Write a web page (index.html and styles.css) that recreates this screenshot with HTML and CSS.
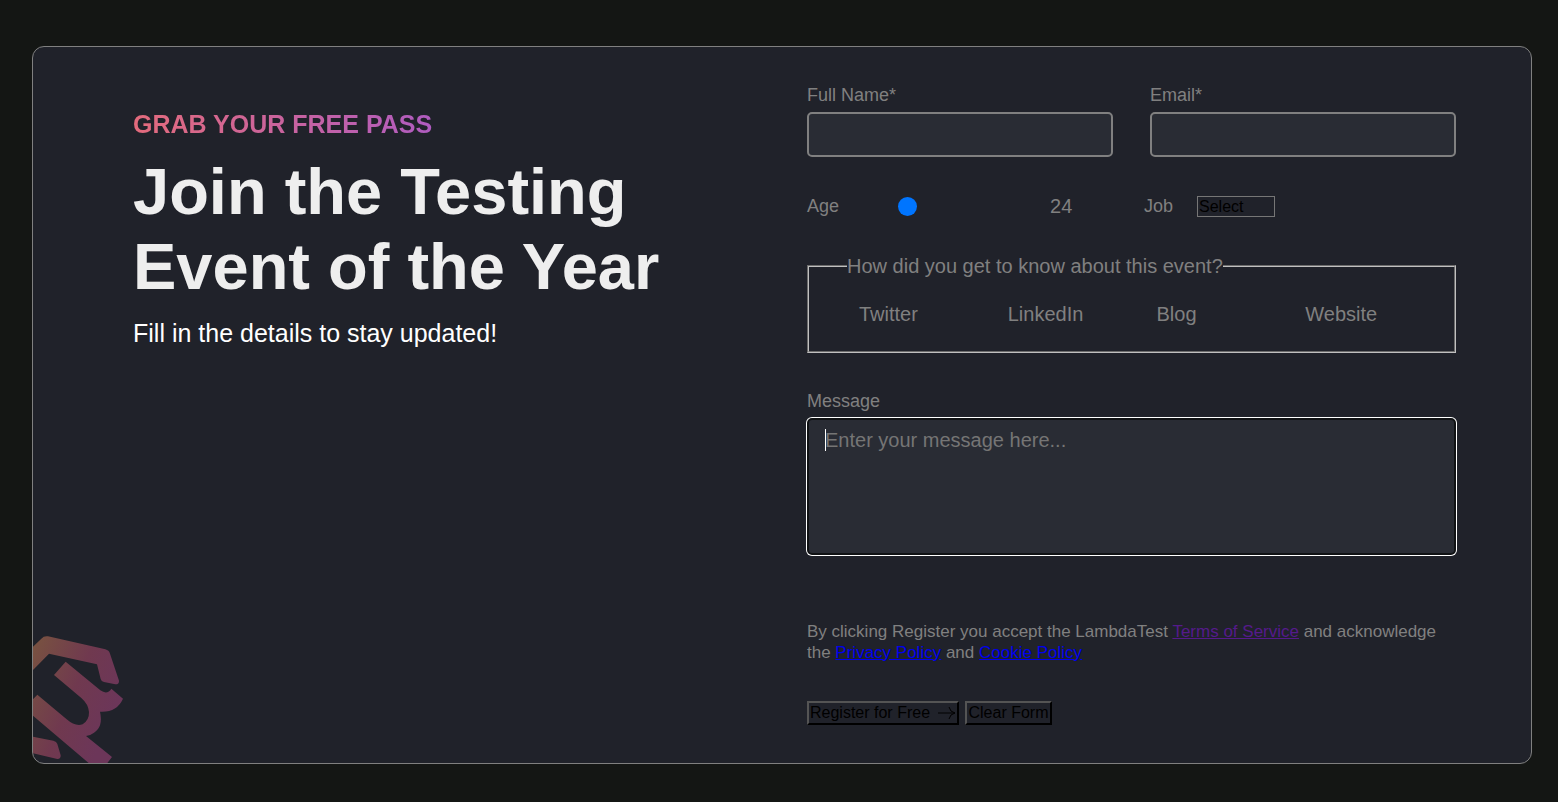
FILE: index.html
```
<!DOCTYPE html>
<html lang="en">
<head>
	<meta charset="UTF-8">
	<meta name="viewport" content="width=device-width, initial-scale=1.0">
	<title>Join the Testing Event of the Year</title>
	<link rel="stylesheet" href="styles.css">
</head>

<body>
	<main class="card">
		<section class="intro">
			<p class="tagline">GRAB YOUR FREE PASS</p>
			<h1>Join the Testing Event of the Year</h1>
			<p class="subtitle">Fill in the details to stay updated!</p>
		</section>

		<form class="register-form">
			<div class="name-row">
				<div class="field">
					<label for="fullname">Full Name*</label>
					<input id="fullname" class="text-input" type="text" name="fullname" required>
				</div>
				<div class="field">
					<label for="email">Email*</label>
					<input id="email" class="text-input" type="email" name="email" required>
				</div>
			</div>

			<div class="age-row">
				<div class="age">
					<label for="age">Age</label>
					<input id="age" type="range" name="age" min="0" max="100" value="24"
						oninput="document.getElementById('age-value').value = this.value">
					<output id="age-value" for="age">24</output>
				</div>
				<div class="job">
					<label for="job">Job</label>
					<select id="job" name="job">
						<option>Select</option>
						<option>Developer</option>
						<option>Tester</option>
					</select>
				</div>
			</div>

			<fieldset class="sources">
				<legend>How did you get to know about this event?</legend>
				<label><input type="checkbox" name="source" value="twitter">Twitter</label>
				<label><input type="checkbox" name="source" value="linkedin">LinkedIn</label>
				<label><input type="checkbox" name="source" value="blog">Blog</label>
				<label><input type="checkbox" name="source" value="website">Website</label>
			</fieldset>

			<div class="field message">
				<label for="message">Message</label>
				<textarea id="message" name="message" placeholder="Enter your message here..." autofocus></textarea>
			</div>

			<p class="terms">By clicking Register you accept the LambdaTest <a class="seen" href="#terms">Terms of Service</a> and acknowledge the <a href="#privacy">Privacy Policy</a> and <a href="#cookies">Cookie Policy</a></p>

			<div class="actions">
				<button type="submit">Register for Free
					<svg class="arrow" viewBox="0 0 18 14" aria-hidden="true">
						<path d="M0 7H17M11 1Q12 6 17 7Q12 8 11 13" />
					</svg>
				</button>
				<button type="reset">Clear Form</button>
			</div>
		</form>

		<svg class="logo" viewBox="39 45 270 384" aria-hidden="true">
			<defs>
				<linearGradient id="logo-fill" gradientUnits="userSpaceOnUse" x1="39" y1="90" x2="309" y2="200">
					<stop offset="0" stop-color="#785141" />
					<stop offset="0.55" stop-color="#70394f" />
					<stop offset="1" stop-color="#6c3659" />
				</linearGradient>
			</defs>
			<g fill="url(#logo-fill)">
				<path d="M39 80L64 56Q72 47 84 49L256 88Q267 91 270 101L297 182Q298 193 286 193L252 186Q244 184 242 177L231 133L87 101L39 150Z" />
				<path d="M137 125L241 211Q262 226 274 206L309 236Q290 278 240 275Q250 320 222 338Q212 346 198 348L276 411L262 429H206L39 287V238L52 224L140 298Q165 320 188 313Q208 300 207 276Q205 252 184 234L102 165Z" />
				<path d="M39 350L100 362Q110 364 112 372L122 406Q123 417 112 417L39 400Z" />
			</g>
		</svg>
	</main>
</body>
</html>
```
FILE: styles.css
```
* {
	box-sizing: border-box;
}

body {
	margin: 0;
	padding: 46px 26px 38px 32px;
	background: #141614;
	color: #808080;
	font-family: "Liberation Sans", Arial, sans-serif;
	font-size: 18px;
	line-height: 21px;
}

h1,
p {
	margin: 0;
}

.card {
	position: relative;
	display: grid;
	grid-template-columns: 1fr 1fr;
	overflow: hidden;
	background: #20222a;
	border: 1px solid #808080;
	border-radius: 12px;
}

.intro {
	padding: 62px 25px 0 100px;
}

.tagline {
	width: fit-content;
	background: linear-gradient(to right, #e36b7c, #b05cc0);
	background-clip: text;
	-webkit-background-clip: text;
	color: transparent;
	font-size: 25px;
	font-weight: 600;
	line-height: 30px;
}

h1 {
	margin-top: 15px;
	color: #eee;
	font-size: 65px;
	line-height: 75px;
}

.subtitle {
	margin-top: 14px;
	color: #fff;
	font-size: 25px;
	line-height: 30px;
}

.register-form {
	padding: 38px 75px 38px 25px;
}

.name-row {
	display: grid;
	grid-template-columns: 1fr 1fr;
	gap: 37px;
}

.field {
	display: flex;
	flex-direction: column;
	gap: 6px;
}

.text-input,
textarea {
	width: 100%;
	background: #292c34;
	border: 2px solid #808080;
	border-radius: 5px;
	color: #fff;
	font-family: inherit;
	font-size: 20px;
	padding: 9px 16px;
}

.text-input {
	height: 45px;
}

.age-row {
	display: grid;
	grid-template-columns: 337px 1fr;
	margin-top: 39px;
}

.age,
.job {
	display: flex;
	align-items: center;
	gap: 24px;
}

input[type="range"] {
	appearance: none;
	width: 163px;
	height: 19px;
	margin: 0;
	background: none;
}

input[type="range"]::-webkit-slider-thumb {
	appearance: none;
	width: 19px;
	height: 19px;
	background: #0075ff;
	border-radius: 50%;
}

output {
	font-size: 20px;
}

select {
	appearance: none;
	width: 78px;
	height: 21px;
	padding: 0 1px;
	background: none;
	border: 1px solid #767676;
	border-radius: 0;
	color: #000;
	font-family: inherit;
	font-size: 16px;
}

.sources {
	display: grid;
	grid-template-columns: repeat(4, 1fr);
	margin: 36px 0 0;
	padding: 23px 25px 25px;
	border: 2px groove #c0c0c0;
	font-size: 20px;
	line-height: 24px;
}

.sources legend {
	margin-left: 13px;
	padding: 0;
	line-height: 26px;
}

.sources input {
	appearance: none;
	width: 25px;
	margin: 0;
}

.message {
	margin-top: 38px;
}

textarea {
	display: block;
	height: 137px;
	line-height: 23px;
	resize: none;
}

textarea:focus {
	border-color: #101214;
	box-shadow: 0 0 0 1px #fff;
	outline: none;
}

/* steady caret while the message is still empty */
textarea:focus:placeholder-shown {
	background-image: linear-gradient(#fff, #fff);
	background-position: 16px 9px;
	background-repeat: no-repeat;
	background-size: 1px 22px;
	caret-color: transparent;
}

::placeholder {
	color: #757575;
}

.terms {
	margin-top: 66px;
	font-size: 17px;
}

a {
	color: #0000ee;
}

a.seen {
	color: #551a8b;
}

.actions {
	display: flex;
	gap: 6px;
	margin-top: 38px;
}

button {
	padding: 0 1px;
	background: none;
	border: 2px outset #000;
	color: #000;
	font-family: inherit;
	font-size: 16px;
	line-height: 20px;
}

.arrow {
	width: 18px;
	height: 14px;
	margin-left: 4px;
	vertical-align: -2px;
	fill: none;
	stroke: #000;
}

.logo {
	position: absolute;
	left: 0;
	bottom: 0;
	width: 90px;
	height: 128px;
}
```
